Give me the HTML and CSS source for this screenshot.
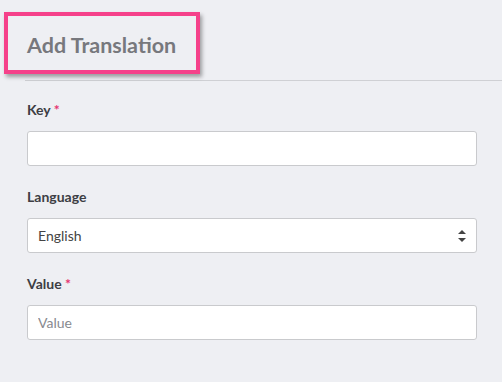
FILE: index.html
```html
<!DOCTYPE html>
<html lang="en">
<head>
    <meta charset="UTF-8">
    <meta name="viewport" content="width=device-width, initial-scale=1.0">
    <title>Add Translation</title>
    <link rel="stylesheet" href="styles.css">
</head>
<body>

    <div class="page-header">
        <h1>Add Translation</h1>
        <div class="highlight"></div>
    </div>

    <form class="translation-form">
        <div class="form-group">
            <label for="key">Key <span class="required">*</span></label>
            <input type="text" id="key">
        </div>

        <div class="form-group">
            <label for="language">Language</label>
            <div class="select-wrap">
                <select id="language">
                    <option>English</option>
                </select>
                <svg class="select-arrows" width="10" height="14" viewBox="0 0 10 14">
                    <path d="M1 5 L5 1 L9 5 Z" fill="#444"/>
                    <path d="M1 9 L5 13 L9 9 Z" fill="#444"/>
                </svg>
            </div>
        </div>

        <div class="form-group">
            <label for="value">Value <span class="required">*</span></label>
            <input type="text" id="value" placeholder="Value">
        </div>
    </form>

</body>
</html>
```

FILE: styles.css
```css
body {
    margin: 0;
    background: #eeeff3;
    font-family: Lato, "Noto Sans", sans-serif;
    color: #333;
}
.page-header {
    position: relative;
    margin-left: 25px;
    padding: 30px 0 0 2px;
    height: 50px;
    border-bottom: 1px solid #cfd0d4;
}
.page-header h1 {
    margin: 0;
    font-size: 21.5px;
    font-weight: 700;
    color: #77787d;
    line-height: 30px;
}
.highlight {
    position: absolute;
    left: -21px;
    top: 12px;
    width: 188px;
    height: 54px;
    border: 4px solid #f5418a;
    box-shadow: 2px 3px 4px rgba(0, 0, 0, 0.35);
}
.translation-form {
    padding: 21px 25px 0 27px;
}
.form-group {
    margin-bottom: 23px;
}
.form-group label {
    display: block;
    font-size: 14px;
    font-weight: 700;
    line-height: 16px;
    color: #3d3e44;
    margin-bottom: 13px;
}
.required {
    color: #e5336f;
}
.form-group input,
.form-group select {
    display: block;
    box-sizing: border-box;
    width: 450px;
    height: 35px;
    padding: 0 10px;
    border: 1px solid #c9cacd;
    border-radius: 3px;
    background: #fff;
    font-family: Lato, "Noto Sans", sans-serif;
    font-size: 14px;
    color: #444;
}
.form-group input::placeholder {
    color: #888a90;
}
.select-wrap {
    position: relative;
    width: 450px;
}
.form-group select {
    appearance: none;
    -webkit-appearance: none;
}
.select-arrows {
    position: absolute;
    right: 10px;
    top: 11px;
}
```
